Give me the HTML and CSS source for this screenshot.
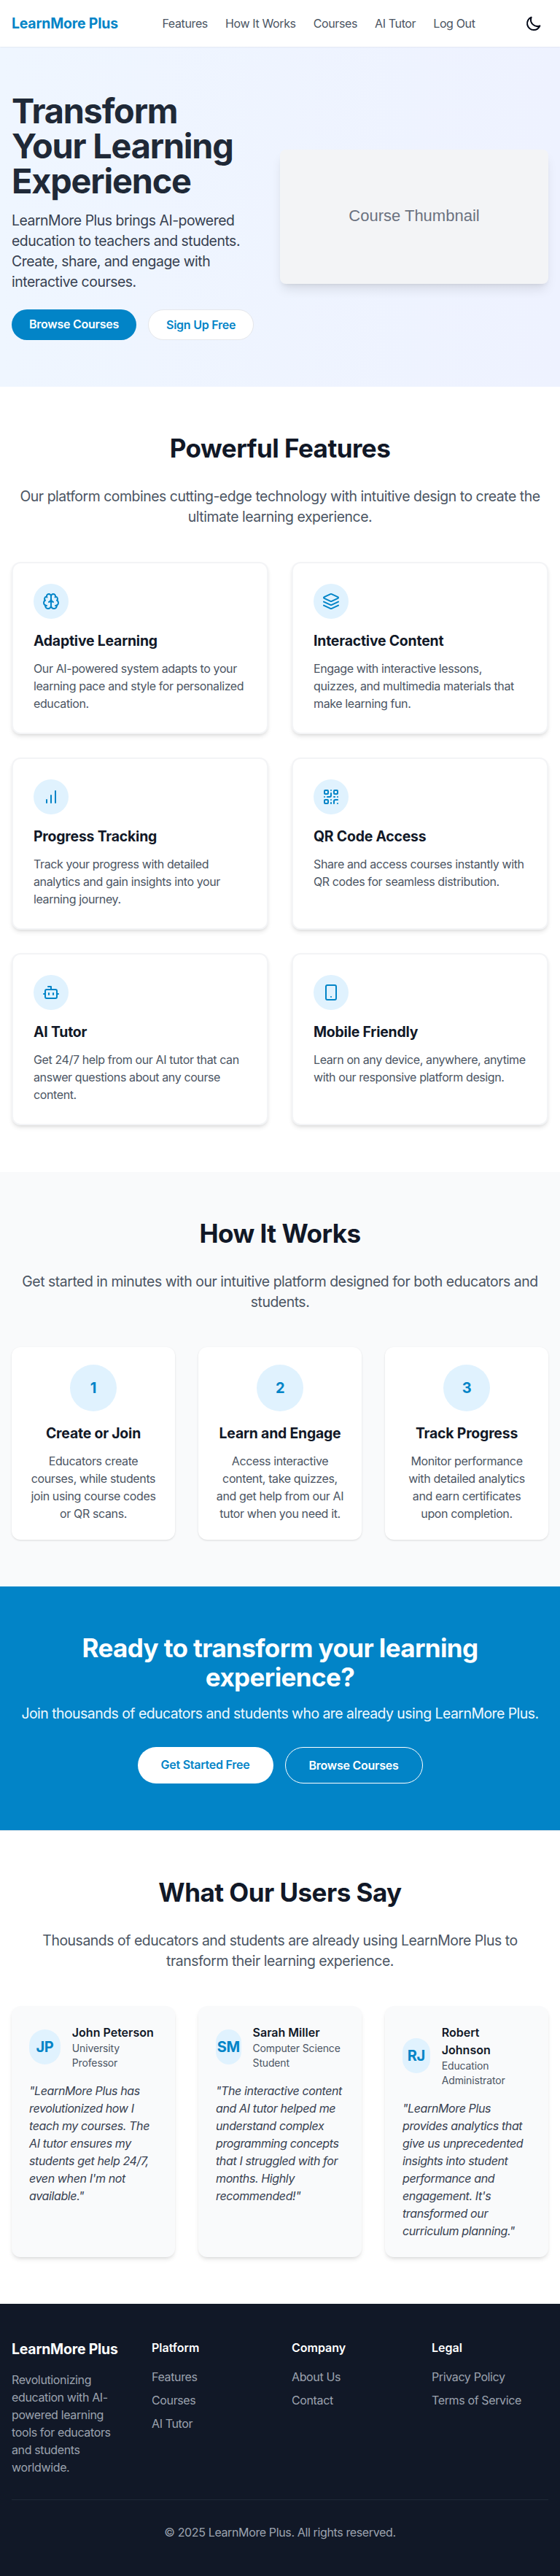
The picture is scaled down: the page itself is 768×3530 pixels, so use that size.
FILE: index.html
```html
<!DOCTYPE html>
<html lang="en">
<head>
<meta charset="utf-8">
<title>LearnMore Plus</title>
<link rel="stylesheet" href="styles.css">
</head>
<body>
<header class="header">
  <a class="brand">LearnMore Plus</a>
  <nav class="nav"><a>Features</a><a>How It Works</a><a>Courses</a><a>AI Tutor</a><a>Log Out</a></nav>
  <button class="theme-toggle" aria-label="Toggle theme">
    <svg class="icon" viewBox="0 0 24 24"><path d="M20.354 15.354A9 9 0 0 1 8.646 3.646 9.003 9.003 0 0 0 12 21a9.003 9.003 0 0 0 8.354-5.646z"/></svg>
  </button>
</header>

<section class="hero">
  <div class="hero-copy">
    <h1>Transform<br>Your Learning Experience</h1>
    <p>LearnMore Plus brings AI-powered education to teachers and students. Create, share, and engage with interactive courses.</p>
    <div class="actions">
      <a class="btn btn-primary">Browse Courses</a>
      <a class="btn btn-secondary">Sign Up Free</a>
    </div>
  </div>
  <div class="thumb">Course Thumbnail</div>
</section>

<section class="section">
  <h2>Powerful Features</h2>
  <p class="lead">Our platform combines cutting-edge technology with intuitive design to create the ultimate learning experience.</p>
  <div class="features">
    <article class="feature">
      <div class="badge"><svg class="icon" viewBox="0 0 24 24"><path d="M12 5a3 3 0 1 0-5.997.125 4 4 0 0 0-2.526 5.77 4 4 0 0 0 .556 6.588A4 4 0 1 0 12 18Z"/><path d="M12 5a3 3 0 1 1 5.997.125 4 4 0 0 1 2.526 5.77 4 4 0 0 1-.556 6.588A4 4 0 1 1 12 18Z"/><path d="M15 13a4.5 4.5 0 0 1-3-4 4.5 4.5 0 0 1-3 4"/><path d="M17.599 6.5a3 3 0 0 0 .399-1.375"/><path d="M6.003 5.125A3 3 0 0 0 6.401 6.5"/><path d="M3.477 10.896a4 4 0 0 1 .585-.396"/><path d="M19.938 10.5a4 4 0 0 1 .585.396"/><path d="M6 18a4 4 0 0 1-1.967-.516"/><path d="M19.967 17.484A4 4 0 0 1 18 18"/></svg></div>
      <h3>Adaptive Learning</h3>
      <p>Our AI-powered system adapts to your learning pace and style for personalized education.</p>
    </article>
    <article class="feature">
      <div class="badge"><svg class="icon" viewBox="0 0 24 24"><path d="m12.83 2.18a2 2 0 0 0-1.66 0L2.6 6.08a1 1 0 0 0 0 1.83l8.58 3.91a2 2 0 0 0 1.66 0l8.58-3.9a1 1 0 0 0 0-1.83Z"/><path d="m22 17.65-9.17 4.16a2 2 0 0 1-1.66 0L2 17.65"/><path d="m22 12.65-9.17 4.16a2 2 0 0 1-1.66 0L2 12.65"/></svg></div>
      <h3>Interactive Content</h3>
      <p>Engage with interactive lessons, quizzes, and multimedia materials that make learning fun.</p>
    </article>
    <article class="feature">
      <div class="badge"><svg class="icon" viewBox="0 0 24 24"><path d="M12 20V10M18 20V4M6 20v-4"/></svg></div>
      <h3>Progress Tracking</h3>
      <p>Track your progress with detailed analytics and gain insights into your learning journey.</p>
    </article>
    <article class="feature">
      <div class="badge"><svg class="icon" viewBox="0 0 24 24"><rect width="5" height="5" x="3" y="3" rx="1"/><rect width="5" height="5" x="16" y="3" rx="1"/><rect width="5" height="5" x="3" y="16" rx="1"/><path d="M21 16h-3a2 2 0 0 0-2 2v3"/><path d="M21 21v.01"/><path d="M12 7v3a2 2 0 0 1-2 2H7"/><path d="M3 12h.01"/><path d="M12 3h.01"/><path d="M12 16v.01"/><path d="M16 12h1"/><path d="M21 12v.01"/><path d="M12 21v-1"/></svg></div>
      <h3>QR Code Access</h3>
      <p>Share and access courses instantly with QR codes for seamless distribution.</p>
    </article>
    <article class="feature">
      <div class="badge"><svg class="icon" viewBox="0 0 24 24"><path d="M12 8V4H8"/><rect width="16" height="12" x="4" y="8" rx="2"/><path d="M2 14h2M20 14h2M15 13v2M9 13v2"/></svg></div>
      <h3>AI Tutor</h3>
      <p>Get 24/7 help from our AI tutor that can answer questions about any course content.</p>
    </article>
    <article class="feature">
      <div class="badge"><svg class="icon" viewBox="0 0 24 24"><rect width="14" height="20" x="5" y="2" rx="2"/><path d="M12 18h.01"/></svg></div>
      <h3>Mobile Friendly</h3>
      <p>Learn on any device, anywhere, anytime with our responsive platform design.</p>
    </article>
  </div>
</section>

<section class="section section-muted">
  <h2>How It Works</h2>
  <p class="lead">Get started in minutes with our intuitive platform designed for both educators and students.</p>
  <div class="three">
    <article class="step"><div class="number">1</div><h3>Create or Join</h3><p>Educators create courses, while students join using course codes or QR scans.</p></article>
    <article class="step"><div class="number">2</div><h3>Learn and Engage</h3><p>Access interactive content, take quizzes, and get help from our AI tutor when you need it.</p></article>
    <article class="step"><div class="number">3</div><h3>Track Progress</h3><p>Monitor performance with detailed analytics and earn certificates upon completion.</p></article>
  </div>
</section>

<section class="cta">
  <h2>Ready to transform your learning experience?</h2>
  <p>Join thousands of educators and students who are already using LearnMore Plus.</p>
  <div class="actions">
    <a class="btn btn-large btn-white">Get Started Free</a>
    <a class="btn btn-large btn-outline">Browse Courses</a>
  </div>
</section>

<section class="section section-bordered">
  <h2>What Our Users Say</h2>
  <p class="lead">Thousands of educators and students are already using LearnMore Plus to transform their learning experience.</p>
  <div class="three">
    <article class="quote">
      <div class="person"><div class="avatar">JP</div><div><h4>John Peterson</h4><p>University Professor</p></div></div>
      <blockquote>"LearnMore Plus has revolutionized how I teach my courses. The AI tutor ensures my students get help 24/7, even when I'm not available."</blockquote>
    </article>
    <article class="quote">
      <div class="person"><div class="avatar">SM</div><div><h4>Sarah Miller</h4><p>Computer Science Student</p></div></div>
      <blockquote>"The interactive content and AI tutor helped me understand complex programming concepts that I struggled with for months. Highly recommended!"</blockquote>
    </article>
    <article class="quote">
      <div class="person"><div class="avatar">RJ</div><div><h4>Robert<br>Johnson</h4><p>Education Administrator</p></div></div>
      <blockquote>"LearnMore Plus provides analytics that give us unprecedented insights into student performance and engagement. It's transformed our curriculum planning."</blockquote>
    </article>
  </div>
</section>

<footer class="footer">
  <div class="footer-grid">
    <div><h3>LearnMore Plus</h3><p>Revolutionizing education with AI-powered learning tools for educators and students worldwide.</p></div>
    <div><h4>Platform</h4><ul><li>Features</li><li>Courses</li><li>AI Tutor</li></ul></div>
    <div><h4>Company</h4><ul><li>About Us</li><li>Contact</li></ul></div>
    <div><h4>Legal</h4><ul><li>Privacy Policy</li><li>Terms of Service</li></ul></div>
  </div>
  <div class="copyright">© 2025 LearnMore Plus. All rights reserved.</div>
</footer>
</body>
</html>
```
FILE: styles.css
```css
* { box-sizing: border-box; margin: 0; padding: 0; }
body { font: 16px/24px Inter, "Liberation Sans", sans-serif; letter-spacing: -0.37px; color: #111827; background: #fff; }
ul { list-style: none; }
.icon { width: 24px; height: 24px; fill: none; stroke: currentColor; stroke-width: 2; stroke-linecap: round; stroke-linejoin: round; }
h2 { font-size: 35px; line-height: 40px; font-weight: 700; letter-spacing: -0.015em; text-align: center; }
h3 { font-size: 19.4px; line-height: 28px; font-weight: 700; letter-spacing: -0.01em; }
h4 { font-size: 16px; line-height: 24px; font-weight: 600; letter-spacing: 0; }

.header { position: relative; height: 64px; padding: 0 16px; display: flex; align-items: center; justify-content: space-between; background: #fff; box-shadow: 0 1px 2px rgba(0, 0, 0, .05); }
.brand { font-size: 19.4px; line-height: 28px; font-weight: 700; letter-spacing: -0.009em; color: #0284c7; }
.nav { display: flex; gap: 24px; color: #4b5563; }
.theme-toggle { width: 40px; height: 40px; display: flex; align-items: center; justify-content: center; border: 0; background: none; color: #020817; }

.hero { display: grid; grid-template-columns: repeat(2, minmax(0, 1fr)); align-items: center; padding: 64px 16px; background: linear-gradient(to right, #eff6ff, #eef2ff); }
.hero-copy { padding-right: 32px; }
.hero h1 { font-size: 46.8px; line-height: 48px; font-weight: 700; letter-spacing: -0.025em; color: #1f2937; margin-bottom: 16px; }
.hero p { font-size: 19.4px; line-height: 28px; letter-spacing: -0.024em; color: #374151; margin-bottom: 24px; }
.thumb { aspect-ratio: 2 / 1; display: flex; align-items: center; justify-content: center; padding-bottom: 2px; border-radius: 8px; background: #f3f4f6; color: #6b7280; font-family: "Liberation Sans", Arial, sans-serif; font-size: 22px; letter-spacing: 0; box-shadow: 0 10px 15px -3px rgba(0, 0, 0, .1), 0 4px 6px -4px rgba(0, 0, 0, .1); }
.actions { display: flex; gap: 16px; }
.btn { padding: 8px 24px; border-radius: 9999px; font-size: 16px; font-weight: 600; letter-spacing: -0.25px; white-space: nowrap; }
.btn-large { padding: 12px 32px; }
.btn-primary { background: #0284c7; color: #fff; }
.btn-secondary { background: #fff; color: #0284c7; border: 1px solid #e5e7eb; }
.btn-white { background: #fff; color: #0284c7; }
.btn-outline { color: #fff; border: 1px solid #fff; }

.section { padding: 64px 16px; }
.section-muted { background: #f9fafb; }
.section-bordered { border-top: 1px solid #e5e7eb; }
.lead { margin: 32px 0 48px; font-size: 19.4px; line-height: 28px; letter-spacing: -0.0235em; text-align: center; color: #4b5563; }
.features { display: grid; grid-template-columns: 1fr 1fr; gap: 32px; }
.feature { padding: 28px; border: 2px solid #f3f4f6; border-radius: 12px; background: #fff; box-shadow: 0 4px 6px -1px rgba(0, 0, 0, .1), 0 2px 4px -2px rgba(0, 0, 0, .1); }
.badge { width: 48px; height: 48px; margin-bottom: 16px; display: flex; align-items: center; justify-content: center; border-radius: 50%; background: #e0f2fe; color: #0284c7; }
.feature h3, .step h3 { margin-bottom: 12px; }
.feature p, .step p { color: #4b5563; }
.feature p { letter-spacing: -0.39px; }
.three { display: grid; grid-template-columns: repeat(3, 1fr); gap: 32px; }
.step { padding: 24px; border-radius: 12px; background: #fff; text-align: center; box-shadow: 0 1px 3px rgba(0, 0, 0, .1), 0 1px 2px -1px rgba(0, 0, 0, .1); }
.number { width: 64px; height: 64px; margin: 0 auto 16px; display: flex; align-items: center; justify-content: center; border-radius: 50%; background: #e0f2fe; color: #0284c7; font-size: 20px; font-weight: 700; }

.cta { padding: 64px 16px; background: #0284c7; color: #fff; text-align: center; }
.cta h2 { margin-bottom: 16px; letter-spacing: -0.0175em; }
.cta p { margin-bottom: 32px; font-size: 19.4px; line-height: 28px; letter-spacing: -0.026em; color: #f0f9ff; }
.cta .actions { justify-content: center; }

.quote { padding: 24px; border-radius: 12px; background: #f9fafb; box-shadow: 0 4px 6px -1px rgba(0, 0, 0, .1), 0 2px 4px -2px rgba(0, 0, 0, .1); }
.person { display: flex; align-items: center; gap: 16px; margin-bottom: 16px; }
.avatar { width: 48px; height: 48px; display: flex; align-items: center; justify-content: center; border-radius: 9999px; background: #e0f2fe; color: #0284c7; font-size: 20px; font-weight: 700; }
.person p { font-size: 14px; line-height: 20px; letter-spacing: -0.15px; color: #4b5563; }
.quote blockquote { color: #374151; font-style: italic; letter-spacing: -0.38px; }

.footer { padding: 48px 16px; background: #111827; color: #9ca3af; }
.footer-grid { display: grid; grid-template-columns: repeat(4, 1fr); gap: 32px; }
.footer h3 { color: #fff; margin-bottom: 16px; }
.footer h4 { color: #fff; margin-bottom: 16px; }
.footer ul { display: grid; gap: 8px; }
.copyright { margin-top: 32px; padding-top: 32px; border-top: 1px solid #1f2937; text-align: center; }
```
